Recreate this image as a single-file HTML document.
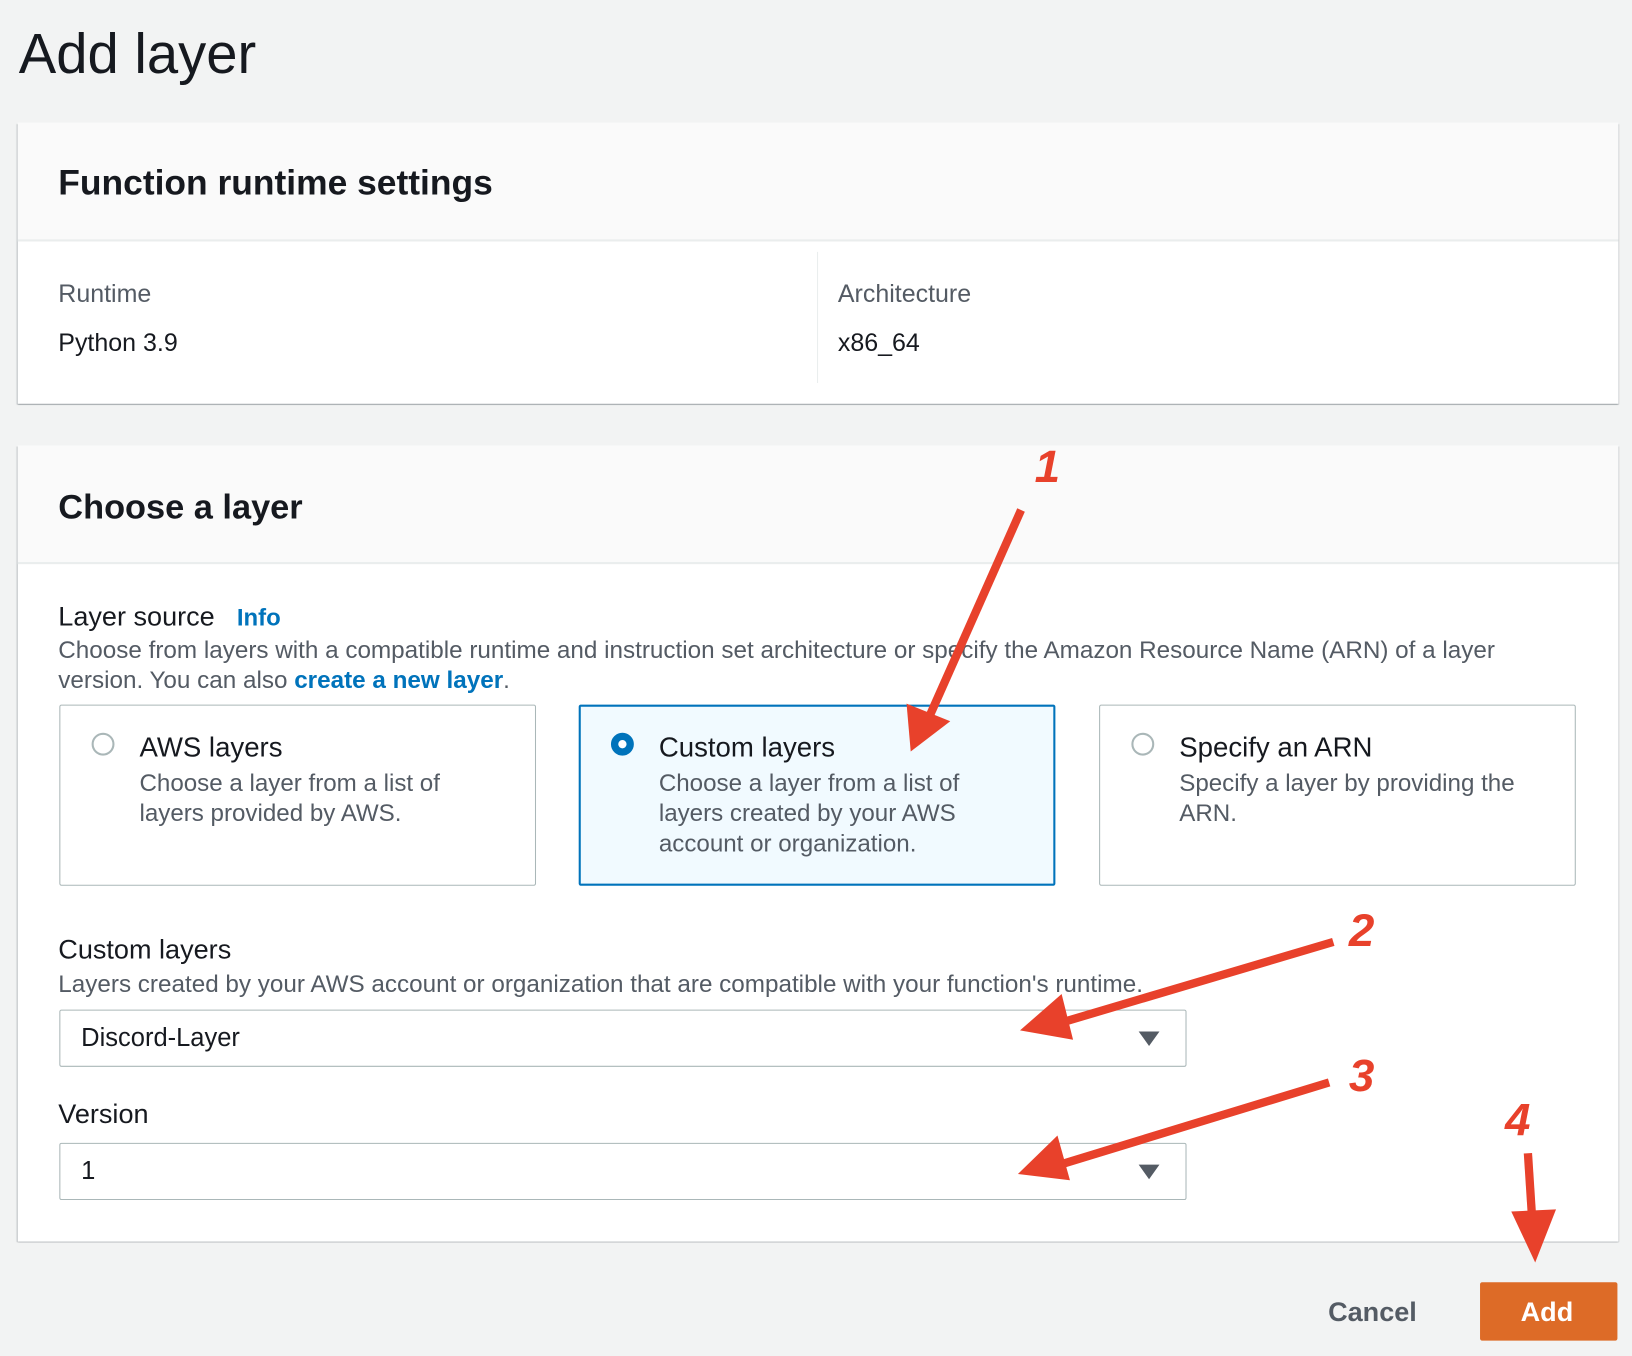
<!DOCTYPE html>
<html><head><meta charset="utf-8">
<style>
html,body{margin:0;padding:0;background:#f2f3f3;overflow:hidden;}
body{width:1632px;height:1356px;}
#w{position:absolute;left:0;top:0;width:1568px;height:1303px;transform:scale(1.040816);transform-origin:0 0;font-family:"Liberation Sans",sans-serif;color:#16191f;}
.a{position:absolute;white-space:nowrap;}
.panel{position:absolute;background:#fff;box-shadow:0 1px 1px 0 rgba(0,28,36,.3),1px 1px 1px 0 rgba(0,28,36,.15),-1px 1px 1px 0 rgba(0,28,36,.15);}
.hdr{position:absolute;left:0;right:0;top:0;background:#fafafa;border-bottom:2px solid #eaeded;}
.h2{font-weight:bold;font-size:33px;}
.lbl{font-size:24px;color:#545b64;}
.val{font-size:24px;color:#16191f;}
.desc{font-size:23.3px;color:#545b64;line-height:29px;}
.card{position:absolute;top:677px;height:174px;width:458px;border:1.5px solid #aab7b8;border-radius:2px;box-sizing:border-box;background:#fff;}
.card.sel{border-color:#0073bb;background:#f1faff;border-width:2px;}
.radio{position:absolute;left:30px;top:26px;width:22px;height:22px;border:2px solid #aab7b8;border-radius:50%;box-sizing:border-box;background:#fff;}
.sel .radio{border:7px solid #0073bb;}
.ct{position:absolute;left:76px;top:25px;font-size:26.5px;white-space:nowrap;}
.cd{position:absolute;left:76px;top:60px;font-size:23.2px;line-height:29px;color:#545b64;white-space:nowrap;}
.selbox{position:absolute;left:57px;width:1083px;height:55px;border:1.5px solid #aab7b8;border-radius:2px;box-sizing:border-box;background:#fff;}
.selbox span{position:absolute;left:20px;top:13px;font-size:24.5px;}
.caret{position:absolute;right:25px;top:20px;width:0;height:0;border-left:10px solid transparent;border-right:10px solid transparent;border-top:14px solid #545b64;}
a{color:#0073bb;font-weight:bold;text-decoration:none;}
</style></head><body>
<div id="w">
<div class="a" style="left:18px;top:21px;font-size:54px;">Add layer</div>

<div class="panel" style="left:17px;top:118px;width:1538px;height:270px;">
  <div class="hdr" style="height:112px;"></div>
  <div class="a h2" style="left:39px;top:39px;font-size:34px;">Function runtime settings</div>
  <div class="a lbl" style="left:39px;top:151px;">Runtime</div>
  <div class="a val" style="left:39px;top:198px;">Python 3.9</div>
  <div style="position:absolute;left:768px;top:124px;width:1px;height:126px;background:#eaeded;"></div>
  <div class="a lbl" style="left:788px;top:151px;">Architecture</div>
  <div class="a val" style="left:788px;top:198px;">x86_64</div>
</div>

<div class="panel" style="left:17px;top:428px;width:1538px;height:765px;">
  <div class="hdr" style="height:112px;"></div>
  <div class="a h2" style="left:39px;top:40px;">Choose a layer</div>
</div>

<div class="a" style="left:56px;top:577px;font-size:26px;">Layer source <a style="margin-left:14px;font-size:23px;">Info</a></div>
<div class="a desc" style="left:56px;top:610px;">Choose from layers with a compatible runtime and instruction set architecture or specify the Amazon Resource Name (ARN) of a layer<br>version. You can also <a>create a new layer</a>.</div>

<div class="card" style="left:57px;"><div class="radio"></div><div class="ct">AWS layers</div><div class="cd">Choose a layer from a list of<br>layers provided by AWS.</div></div>
<div class="card sel" style="left:556px;"><div class="radio" style="left:29px;top:25px;"></div><div class="ct" style="left:75px;top:24px;">Custom layers</div><div class="cd" style="left:75px;top:59px;">Choose a layer from a list of<br>layers created by your AWS<br>account or organization.</div></div>
<div class="card" style="left:1056px;"><div class="radio"></div><div class="ct">Specify an ARN</div><div class="cd">Specify a layer by providing the<br>ARN.</div></div>

<div class="a" style="left:56px;top:897px;font-size:26px;">Custom layers</div>
<div class="a desc" style="left:56px;top:931px;">Layers created by your AWS account or organization that are compatible with your function's runtime.</div>
<div class="selbox" style="top:970px;"><span>Discord-Layer</span><div class="caret"></div></div>

<div class="a" style="left:56px;top:1055px;font-size:26px;">Version</div>
<div class="selbox" style="top:1098px;"><span>1</span><div class="caret"></div></div>

<div class="a" style="left:1276px;top:1245px;font-size:26px;font-weight:bold;color:#545b64;">Cancel</div>
<div style="position:absolute;left:1422px;top:1232px;width:132px;height:56px;background:#dd6b27;border-radius:2px;"></div>
<div class="a" style="left:1461px;top:1245px;font-size:26px;font-weight:bold;color:#fff;">Add</div>

<svg style="position:absolute;left:0;top:0" width="1568" height="1303" viewBox="0 0 1568 1303">
 <g stroke="#e8412b" stroke-width="8" fill="none" stroke-linecap="butt">
  <line x1="981" y1="490" x2="894" y2="686"/>
  <line x1="1281" y1="905" x2="1018" y2="983"/>
  <line x1="1277" y1="1040" x2="1015" y2="1120"/>
  <line x1="1468" y1="1108" x2="1472" y2="1170"/>
 </g>
 <g fill="#e8412b">
  <polygon points="875,722 871,676 913,693"/>
  <polygon points="980,990 1020,955 1031,999"/>
  <polygon points="978,1128 1016,1091 1028,1134"/>
  <polygon points="1475,1213 1452,1164 1495,1162"/>
 </g>
 <g fill="#e8412b" font-family="Liberation Sans,sans-serif" font-weight="bold" font-style="italic" font-size="44">
  <text x="994" y="463">1</text>
  <text x="1296" y="909">2</text>
  <text x="1296" y="1048">3</text>
  <text x="1446" y="1091">4</text>
 </g>
</svg>
</div>
</body></html>
